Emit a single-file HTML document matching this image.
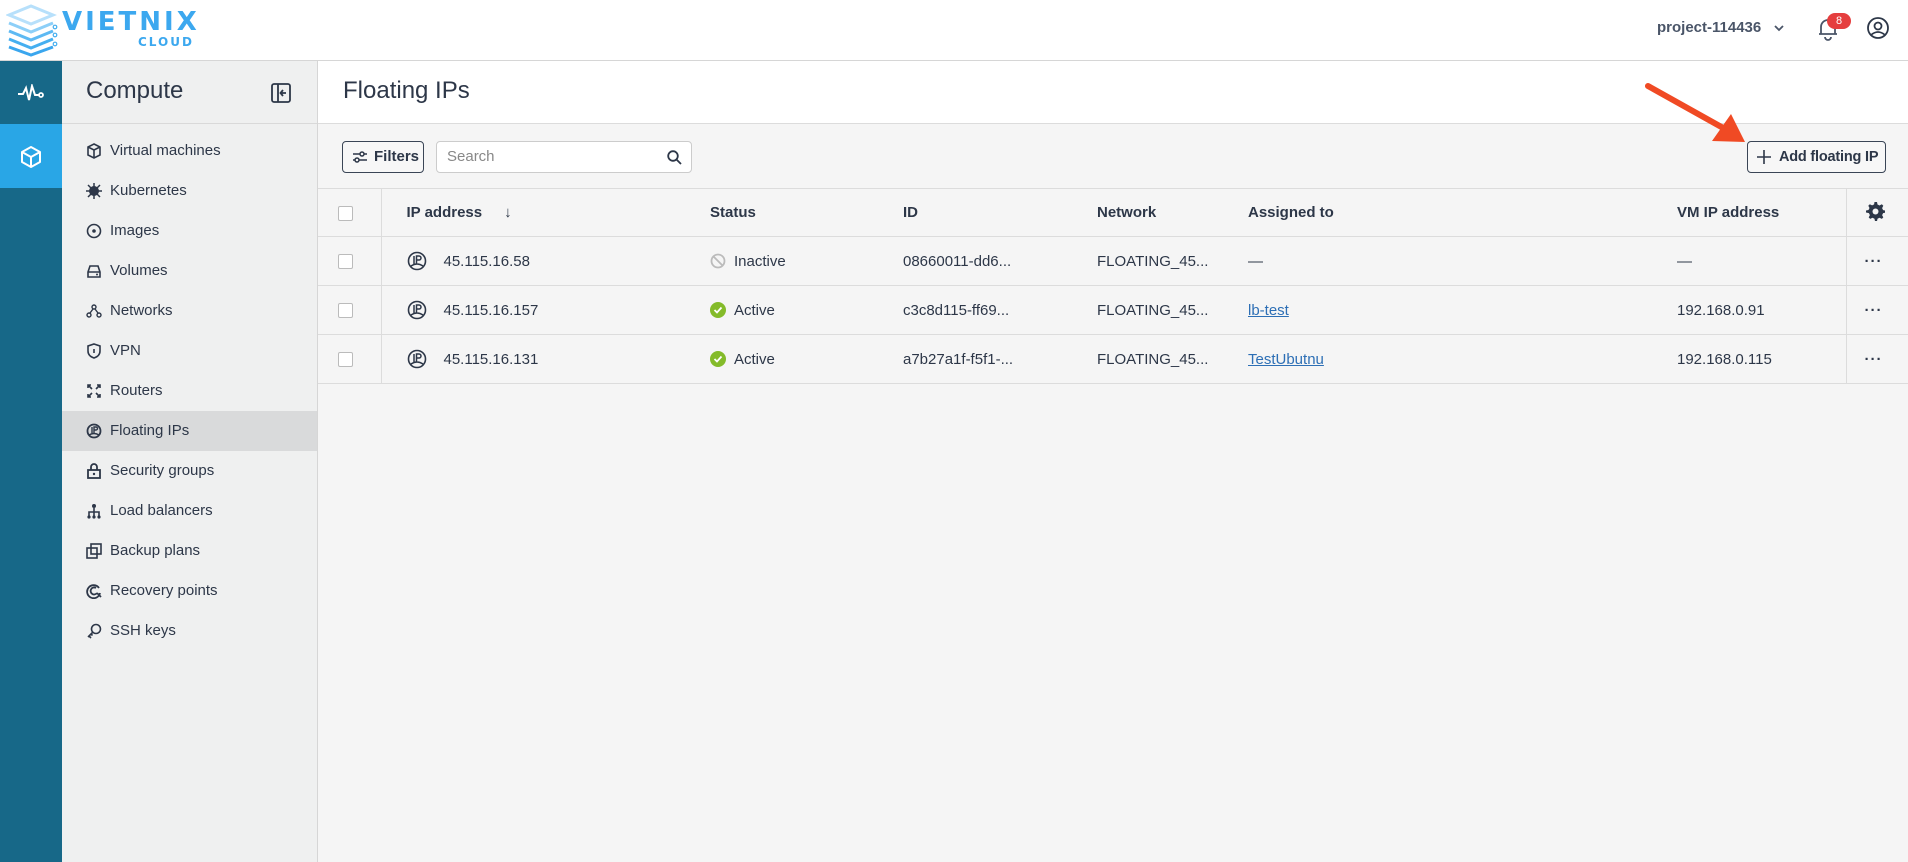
<!DOCTYPE html>
<html><head><meta charset="utf-8"><style>
*{box-sizing:border-box;margin:0;padding:0}
body{width:1908px;height:862px;overflow:hidden;font-family:"Liberation Sans",sans-serif;color:#2d3748;background:#f5f5f5;position:relative}
.hdr{position:absolute;left:0;top:0;width:1908px;height:61px;background:#fff;border-bottom:1px solid #d6d6d6}
.rail{position:absolute;left:0;top:61px;width:62px;height:801px;background:#176888}
.rail .act{position:absolute;top:63px;left:0;width:62px;height:64px;background:#29a6e6}
.side{position:absolute;left:62px;top:61px;width:256px;height:801px;background:#eff0f0;border-right:1px solid #d6d6d6}
.side h2{position:absolute;left:24px;top:16px;font-size:24px;font-weight:400;color:#2d3748}
.side .sh{position:absolute;left:0;top:62px;width:255px;border-top:1px solid #d9d9d9}
.nav{position:absolute;left:0;width:255px;height:40px;font-size:15px;color:#2d3748;line-height:40px;padding-left:48px}
.nav svg{position:absolute;left:24px;top:12px}
.nav.on{background:#d9dadb}
.main{position:absolute;left:318px;top:61px;width:1590px;height:801px}
.ttl{height:63px;background:#fff;border-bottom:1px solid #dcdcdc;font-size:24px;padding:16px 0 0 25px}
.btn{position:absolute;border:1px solid #3a4556;border-radius:4px;background:#f7f7f7;font-size:15px;font-weight:bold;color:#2d3748;height:32px;line-height:30px;white-space:nowrap}
.srch{position:absolute;left:118px;top:80px;width:256px;height:32px;border:1px solid #ccc;border-radius:4px;background:#fff;font-size:15px;color:#888;line-height:30px;padding-left:10px}
table{position:absolute;left:0;top:127px;width:1590px;border-collapse:collapse;font-size:15px}
td,th{height:49px;border-bottom:1px solid #dcdcdc;text-align:left;font-weight:400;position:relative}
th{font-weight:bold;height:48px}
.cb{display:inline-block;width:15px;height:15px;border:1px solid #bbb;border-radius:2px;background:#fff;vertical-align:middle}
a{color:#2d6fb5;text-decoration:underline}
.dots{font-weight:bold;letter-spacing:1px}
</style></head><body>
<div class="hdr">
<svg style="position:absolute;left:6px;top:3px" width="52" height="54" viewBox="0 0 52 54">
<g fill="none" stroke-width="3"><path d="M3 12 L25 3 L47 12 L25 21 Z" stroke="#b7e0fb"/><path d="M3 20 L25 29 L47 20" stroke="#8ccff8"/><path d="M3 28 L25 37 L47 28" stroke="#5db9f3"/><path d="M3 36 L25 45 L47 36" stroke="#45aff0"/><path d="M3 44 L25 52 L47 44" stroke="#3aa6ee"/></g>
<circle cx="49" cy="24" r="1.8" fill="none" stroke="#45aff0" stroke-width="1.2"/><circle cx="49" cy="32" r="1.8" fill="none" stroke="#45aff0" stroke-width="1.2"/><circle cx="49" cy="41" r="1.8" fill="none" stroke="#45aff0" stroke-width="1.2"/></svg>
<div style="position:absolute;left:62px;top:8px;font-size:26px;line-height:28px;font-weight:bold;color:#3ca8ef;letter-spacing:3px;font-family:'DejaVu Sans',sans-serif">VIETNIX</div>
<div style="position:absolute;left:138px;top:36px;font-size:12px;line-height:13px;font-weight:bold;color:#3ca8ef;letter-spacing:2px;font-family:'DejaVu Sans',sans-serif">CLOUD</div>
<div style="position:absolute;left:1657px;top:19px;font-size:15px;font-weight:bold;color:#4a5568">project-114436</div>
<svg style="position:absolute;left:1773px;top:23px" width="12" height="10"><path d="M2 3 L6 7 L10 3" fill="none" stroke="#4a5568" stroke-width="1.8"/></svg>
<svg style="position:absolute;left:1817px;top:17px" width="22" height="24" viewBox="0 0 22 24"><path d="M4 17 V10 a7 7 0 0 1 14 0 V17 H2 H20 M8 20 a3 3 0 0 0 6 0" fill="none" stroke="#4a5568" stroke-width="1.8"/></svg>
<div style="position:absolute;left:1827px;top:13px;width:24px;height:16px;border-radius:8px;background:#e53e3e;color:#fff;font-size:11px;text-align:center;line-height:16px">8</div>
<svg style="position:absolute;left:1866px;top:16px" width="24" height="24" viewBox="0 0 24 24"><circle cx="12" cy="12" r="10" fill="none" stroke="#2d3748" stroke-width="1.8"/><circle cx="12" cy="10" r="3.5" fill="none" stroke="#2d3748" stroke-width="1.8"/><path d="M5 19 Q12 13 19 19" fill="none" stroke="#2d3748" stroke-width="1.8"/></svg>
</div>
<div class="rail"><div class="act"></div>
<svg style="position:absolute;left:17px;top:23px" width="28" height="18" viewBox="0 0 28 18"><path d="M1 10 H6 L9 4 L12 16 L15 2 L18 11 H22" fill="none" stroke="#fff" stroke-width="2"/><circle cx="24" cy="11" r="2" fill="none" stroke="#fff" stroke-width="1.8"/></svg>
<svg style="position:absolute;left:19px;top:84px" width="24" height="24" viewBox="0 0 24 24"><path d="M12 2 L21 7 V17 L12 22 L3 17 V7 Z M3 7 L12 12 L21 7 M12 12 V22" fill="none" stroke="#fff" stroke-width="2" stroke-linejoin="round"/></svg>
</div>
<div class="side"><h2>Compute</h2>
<svg style="position:absolute;left:209px;top:22px" width="20" height="20" viewBox="0 0 20 20"><rect x="1" y="1" width="18" height="18" rx="2" fill="none" stroke="#2d3748" stroke-width="1.8"/><path d="M7 1 V19 M15 10 H10 M12 7 L9.5 10 L12 13" fill="none" stroke="#2d3748" stroke-width="1.8"/></svg>
<div class="sh"></div>
<div class="nav" style="top:70px"><svg width="16" height="16" viewBox="0 0 16 16"><path d="M8 1 L14 4 V12 L8 15 L2 12 V4 Z M2 4 L8 7 L14 4 M8 7 V15" fill="none" stroke="#2d3748" stroke-width="1.6"/></svg>Virtual machines</div>
<div class="nav" style="top:110px"><svg width="16" height="16" viewBox="0 0 16 16"><circle cx="8" cy="8" r="5" fill="#2d3748"/><path d="M8 0V16M0 8H16M2 2L14 14M14 2L2 14" stroke="#2d3748" stroke-width="1.5"/></svg>Kubernetes</div>
<div class="nav" style="top:150px"><svg width="16" height="16" viewBox="0 0 16 16"><circle cx="8" cy="8" r="6.5" fill="none" stroke="#2d3748" stroke-width="1.6"/><circle cx="8" cy="8" r="1.8" fill="#2d3748"/></svg>Images</div>
<div class="nav" style="top:190px"><svg width="16" height="16" viewBox="0 0 16 16"><path d="M2 9 L4 3 H12 L14 9 V14 H2 Z M2 9 H14" fill="none" stroke="#2d3748" stroke-width="1.6"/><circle cx="11" cy="11.5" r="1" fill="#2d3748"/></svg>Volumes</div>
<div class="nav" style="top:230px"><svg width="16" height="16" viewBox="0 0 16 16"><circle cx="8" cy="4" r="2" fill="none" stroke="#2d3748" stroke-width="1.4"/><circle cx="3" cy="12" r="2" fill="none" stroke="#2d3748" stroke-width="1.4"/><circle cx="13" cy="12" r="2" fill="none" stroke="#2d3748" stroke-width="1.4"/><path d="M7 6 L4 10 M9 6 L12 10" stroke="#2d3748" stroke-width="1.4"/></svg>Networks</div>
<div class="nav" style="top:270px"><svg width="16" height="16" viewBox="0 0 16 16"><path d="M8 1 L14 3 V8 Q14 13 8 15 Q2 13 2 8 V3 Z M8 6 V10" fill="none" stroke="#2d3748" stroke-width="1.6"/></svg>VPN</div>
<div class="nav" style="top:310px"><svg width="16" height="16" viewBox="0 0 16 16"><path d="M2 2 L6 6 M14 2 L10 6 M2 14 L6 10 M14 14 L10 10 M2 5V2H5 M11 2H14V5 M2 11V14H5 M14 11V14H11" fill="none" stroke="#2d3748" stroke-width="1.6"/></svg>Routers</div>
<div class="nav on" style="top:350px"><svg width="16" height="16" viewBox="0 0 16 16"><circle cx="8" cy="8" r="6.5" fill="none" stroke="#2d3748" stroke-width="1.8"/><path d="M6 4 V10 M8 10 V4 H10 a1.5 1.5 0 0 1 0 3 H8 M3 12 Q8 9 13 12" fill="none" stroke="#2d3748" stroke-width="1.4"/></svg>Floating IPs</div>
<div class="nav" style="top:390px"><svg width="16" height="16" viewBox="0 0 16 16"><rect x="2" y="7" width="12" height="8" fill="none" stroke="#2d3748" stroke-width="1.8"/><path d="M5 7 V4 a3 3 0 0 1 6 0 V7" fill="none" stroke="#2d3748" stroke-width="1.8"/><circle cx="8" cy="11" r="1.2" fill="#2d3748"/></svg>Security groups</div>
<div class="nav" style="top:430px"><svg width="16" height="16" viewBox="0 0 16 16"><circle cx="8" cy="3" r="2" fill="#2d3748"/><path d="M8 5 V9 M3 13 V9 H13 V13 M8 9 V13" fill="none" stroke="#2d3748" stroke-width="1.6"/><circle cx="3" cy="14" r="1.6" fill="#2d3748"/><circle cx="8" cy="14" r="1.6" fill="#2d3748"/><circle cx="13" cy="14" r="1.6" fill="#2d3748"/></svg>Load balancers</div>
<div class="nav" style="top:470px"><svg width="16" height="16" viewBox="0 0 16 16"><rect x="1" y="5" width="10" height="10" fill="none" stroke="#2d3748" stroke-width="1.6"/><rect x="5" y="1" width="10" height="10" fill="none" stroke="#2d3748" stroke-width="1.6"/></svg>Backup plans</div>
<div class="nav" style="top:510px"><svg width="16" height="16" viewBox="0 0 16 16"><path d="M13 5 A6.5 6.5 0 1 0 14 10 M10 5 A3.5 3.5 0 1 0 11 10" fill="none" stroke="#2d3748" stroke-width="1.8"/><path d="M11 10 L15 14" stroke="#2d3748" stroke-width="1.8"/></svg>Recovery points</div>
<div class="nav" style="top:550px"><svg width="16" height="16" viewBox="0 0 16 16"><circle cx="10" cy="6" r="4.5" fill="none" stroke="#2d3748" stroke-width="1.6"/><path d="M7 9 L2 14 M3 13 L5 15 M5 11 L6.5 12.5" fill="none" stroke="#2d3748" stroke-width="1.6"/></svg>SSH keys</div>
</div>
<div class="main">
<div class="ttl">Floating IPs</div>
<div class="btn" style="left:24px;top:80px;width:82px;padding-left:31px">Filters
<svg style="position:absolute;left:9px;top:8px" width="16" height="14" viewBox="0 0 16 14"><path d="M1 4 H15 M1 10 H15" stroke="#2d3748" stroke-width="1.5"/><circle cx="10" cy="4" r="2" fill="#f7f7f7" stroke="#2d3748" stroke-width="1.5"/><circle cx="5" cy="10" r="2" fill="#f7f7f7" stroke="#2d3748" stroke-width="1.5"/></svg></div>
<div class="srch">Search<svg style="position:absolute;right:9px;top:8px" width="15" height="15" viewBox="0 0 15 15"><circle cx="6" cy="6" r="4.8" fill="none" stroke="#2d3748" stroke-width="1.8"/><path d="M9.5 9.5 L14 14" stroke="#2d3748" stroke-width="1.8"/></svg></div>
<div class="btn" style="left:1429px;top:80px;width:139px;padding-left:31px;font-size:14.5px;letter-spacing:-0.2px">Add floating IP
<svg style="position:absolute;left:9px;top:8px" width="14" height="14"><path d="M7 0V14M0 7H14" stroke="#2d3748" stroke-width="1.6"/></svg></div>
<table>
<tr style="border-top:1px solid #dcdcdc"><th style="width:63px;border-right:1px solid #dcdcdc;padding-left:20px"><span class="cb"></span></th><th style="width:329px;padding-left:25px">IP address<span style="margin-left:22px;font-weight:bold">↓</span></th><th style="width:193px">Status</th><th style="width:194px">ID</th><th style="width:151px">Network</th><th style="width:429px">Assigned to</th><th style="width:169px">VM IP address</th><th style="border-left:1px solid #dcdcdc;padding-left:18px"><svg width="20" height="20" viewBox="0 0 20 20"><path d="M10 1 l2 0 .5 2.5 2 1 2.3-1.2 1.5 1.5-1.2 2.3 1 2 2.5.5v2l-2.5.5-1 2 1.2 2.3-1.5 1.5-2.3-1.2-2 1-.5 2.5h-2l-.5-2.5-2-1-2.3 1.2-1.5-1.5 1.2-2.3-1-2L1 11.5v-2l2.5-.5 1-2L3.3 4.7l1.5-1.5 2.3 1.2 2-1L9.5 1z" fill="#2d3748"/><circle cx="10.5" cy="10.5" r="3" fill="#f5f5f5"/></svg></th></tr>
<tr><td style="border-right:1px solid #dcdcdc;padding-left:20px"><span class="cb"></span></td><td style="padding-left:25px"><svg width="20" height="20" viewBox="0 0 20 20" style="vertical-align:-5px;margin-right:17px"><circle cx="10" cy="10" r="8.5" fill="none" stroke="#2d3748" stroke-width="1.6"/><path d="M7 5 V13 M9.5 13 V5 H12 a2 2 0 0 1 0 4 H9.5 M4 15 Q10 11 16 15" fill="none" stroke="#2d3748" stroke-width="1.5"/></svg>45.115.16.58</td><td><svg width="16" height="16" viewBox="0 0 16 16" style="vertical-align:-3px;margin-right:8px"><circle cx="8" cy="8" r="6.5" fill="none" stroke="#bbb" stroke-width="1.8"/><path d="M3.5 3.5 L12.5 12.5" stroke="#bbb" stroke-width="1.8"/></svg>Inactive</td><td>08660011-dd6...</td><td>FLOATING_45...</td><td>—</td><td>—</td><td style="border-left:1px solid #dcdcdc;padding-left:18px" class="dots">···</td></tr>
<tr><td style="border-right:1px solid #dcdcdc;padding-left:20px"><span class="cb"></span></td><td style="padding-left:25px"><svg width="20" height="20" viewBox="0 0 20 20" style="vertical-align:-5px;margin-right:17px"><circle cx="10" cy="10" r="8.5" fill="none" stroke="#2d3748" stroke-width="1.6"/><path d="M7 5 V13 M9.5 13 V5 H12 a2 2 0 0 1 0 4 H9.5 M4 15 Q10 11 16 15" fill="none" stroke="#2d3748" stroke-width="1.5"/></svg>45.115.16.157</td><td><svg width="16" height="16" viewBox="0 0 16 16" style="vertical-align:-3px;margin-right:8px"><circle cx="8" cy="8" r="8" fill="#84bb2a"/><path d="M4.5 8 L7 10.5 L11.5 5.5" fill="none" stroke="#fff" stroke-width="1.8"/></svg>Active</td><td>c3c8d115-ff69...</td><td>FLOATING_45...</td><td><a>lb-test</a></td><td>192.168.0.91</td><td style="border-left:1px solid #dcdcdc;padding-left:18px" class="dots">···</td></tr>
<tr><td style="border-right:1px solid #dcdcdc;padding-left:20px"><span class="cb"></span></td><td style="padding-left:25px"><svg width="20" height="20" viewBox="0 0 20 20" style="vertical-align:-5px;margin-right:17px"><circle cx="10" cy="10" r="8.5" fill="none" stroke="#2d3748" stroke-width="1.6"/><path d="M7 5 V13 M9.5 13 V5 H12 a2 2 0 0 1 0 4 H9.5 M4 15 Q10 11 16 15" fill="none" stroke="#2d3748" stroke-width="1.5"/></svg>45.115.16.131</td><td><svg width="16" height="16" viewBox="0 0 16 16" style="vertical-align:-3px;margin-right:8px"><circle cx="8" cy="8" r="8" fill="#84bb2a"/><path d="M4.5 8 L7 10.5 L11.5 5.5" fill="none" stroke="#fff" stroke-width="1.8"/></svg>Active</td><td>a7b27a1f-f5f1-...</td><td>FLOATING_45...</td><td><a>TestUbutnu</a></td><td>192.168.0.115</td><td style="border-left:1px solid #dcdcdc;padding-left:18px" class="dots">···</td></tr>
</table>
</div>
<svg style="position:absolute;left:1640px;top:80px" width="110" height="70" viewBox="0 0 110 70"><path d="M8 6 L85 49" stroke="#f04a24" stroke-width="6" stroke-linecap="round"/><path d="M105 62 L72 61 L91 34 Z" fill="#f04a24"/></svg>
</body></html>
